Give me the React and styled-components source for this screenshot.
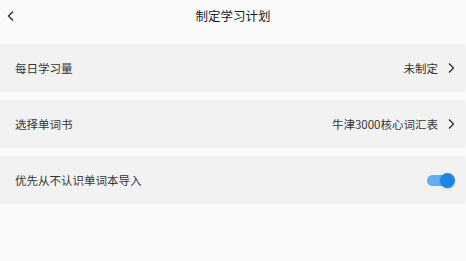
import React, { useState } from "react";
import styled, { createGlobalStyle } from "styled-components";

const GlobalStyle = createGlobalStyle`
  html, body {
    margin: 0;
    padding: 0;
    background: #fafafa;
    font-family: "Noto Sans CJK SC", "Noto Sans", sans-serif;
    color: #222;
  }
`;

const Page = styled.div`
  width: 466px;
  height: 261px;
  background: #fafafa;
  overflow: hidden;
`;

const TopBar = styled.div`
  height: 44px;
  display: flex;
  align-items: flex-start;
  justify-content: center;
  position: relative;
`;

const BackButton = styled.button`
  position: absolute;
  left: 3px;
  top: 8px;
  width: 16px;
  height: 16px;
  padding: 0;
  border: none;
  background: none;
  display: flex;
  align-items: center;
  justify-content: center;
`;

const Title = styled.div`
  font-size: 12.5px;
  line-height: 16px;
  margin-top: 8px;
  color: #1a1a1a;
`;

const List = styled.div`
  display: flex;
  flex-direction: column;
  gap: 8px;
`;

const Row = styled.div`
  height: 48px;
  background: #f2f2f2;
  border-radius: 3px;
  display: flex;
  align-items: center;
  padding: 0 11px 0 15px;
`;

const Label = styled.div`
  flex: 1;
  font-size: 11.5px;
  color: #333;
`;

const Value = styled.div`
  font-size: 11.5px;
  color: #333;
  margin-right: 9px;
`;

const Track = styled.div`
  width: 27px;
  height: 11px;
  border-radius: 6px;
  background: ${(p) => (p.$on ? "#64adee" : "#c8c8c8")};
  position: relative;
  margin-right: 1px;
`;

const Thumb = styled.div`
  position: absolute;
  top: -2px;
  left: ${(p) => (p.$on ? "13px" : "-1px")};
  width: 15px;
  height: 15px;
  border-radius: 50%;
  background: ${(p) => (p.$on ? "#1b86e3" : "#fff")};
  box-shadow: 0 1px 2px rgba(0, 0, 0, 0.2);
`;

const Chevron = ({ dir = "right" }) => (
  <svg width="8" height="12" viewBox="0 0 8 12">
    <path
      d={dir === "right" ? "M2 1.5 L6.5 6 L2 10.5" : "M6 1.5 L1.5 6 L6 10.5"}
      fill="none"
      stroke="#2a2a2a"
      strokeWidth="1.3"
    />
  </svg>
);

const App = () => {
  const [on, setOn] = useState(true);
  return (
    <Page>
      <GlobalStyle />
      <TopBar>
        <BackButton>
          <Chevron dir="left" />
        </BackButton>
        <Title>制定学习计划</Title>
      </TopBar>
      <List>
        <Row>
          <Label>每日学习量</Label>
          <Value>未制定</Value>
          <Chevron />
        </Row>
        <Row>
          <Label>选择单词书</Label>
          <Value>牛津3000核心词汇表</Value>
          <Chevron />
        </Row>
        <Row onClick={() => setOn(!on)}>
          <Label>优先从不认识单词本导入</Label>
          <Track $on={on}>
            <Thumb $on={on} />
          </Track>
        </Row>
      </List>
    </Page>
  );
};

export default App;
